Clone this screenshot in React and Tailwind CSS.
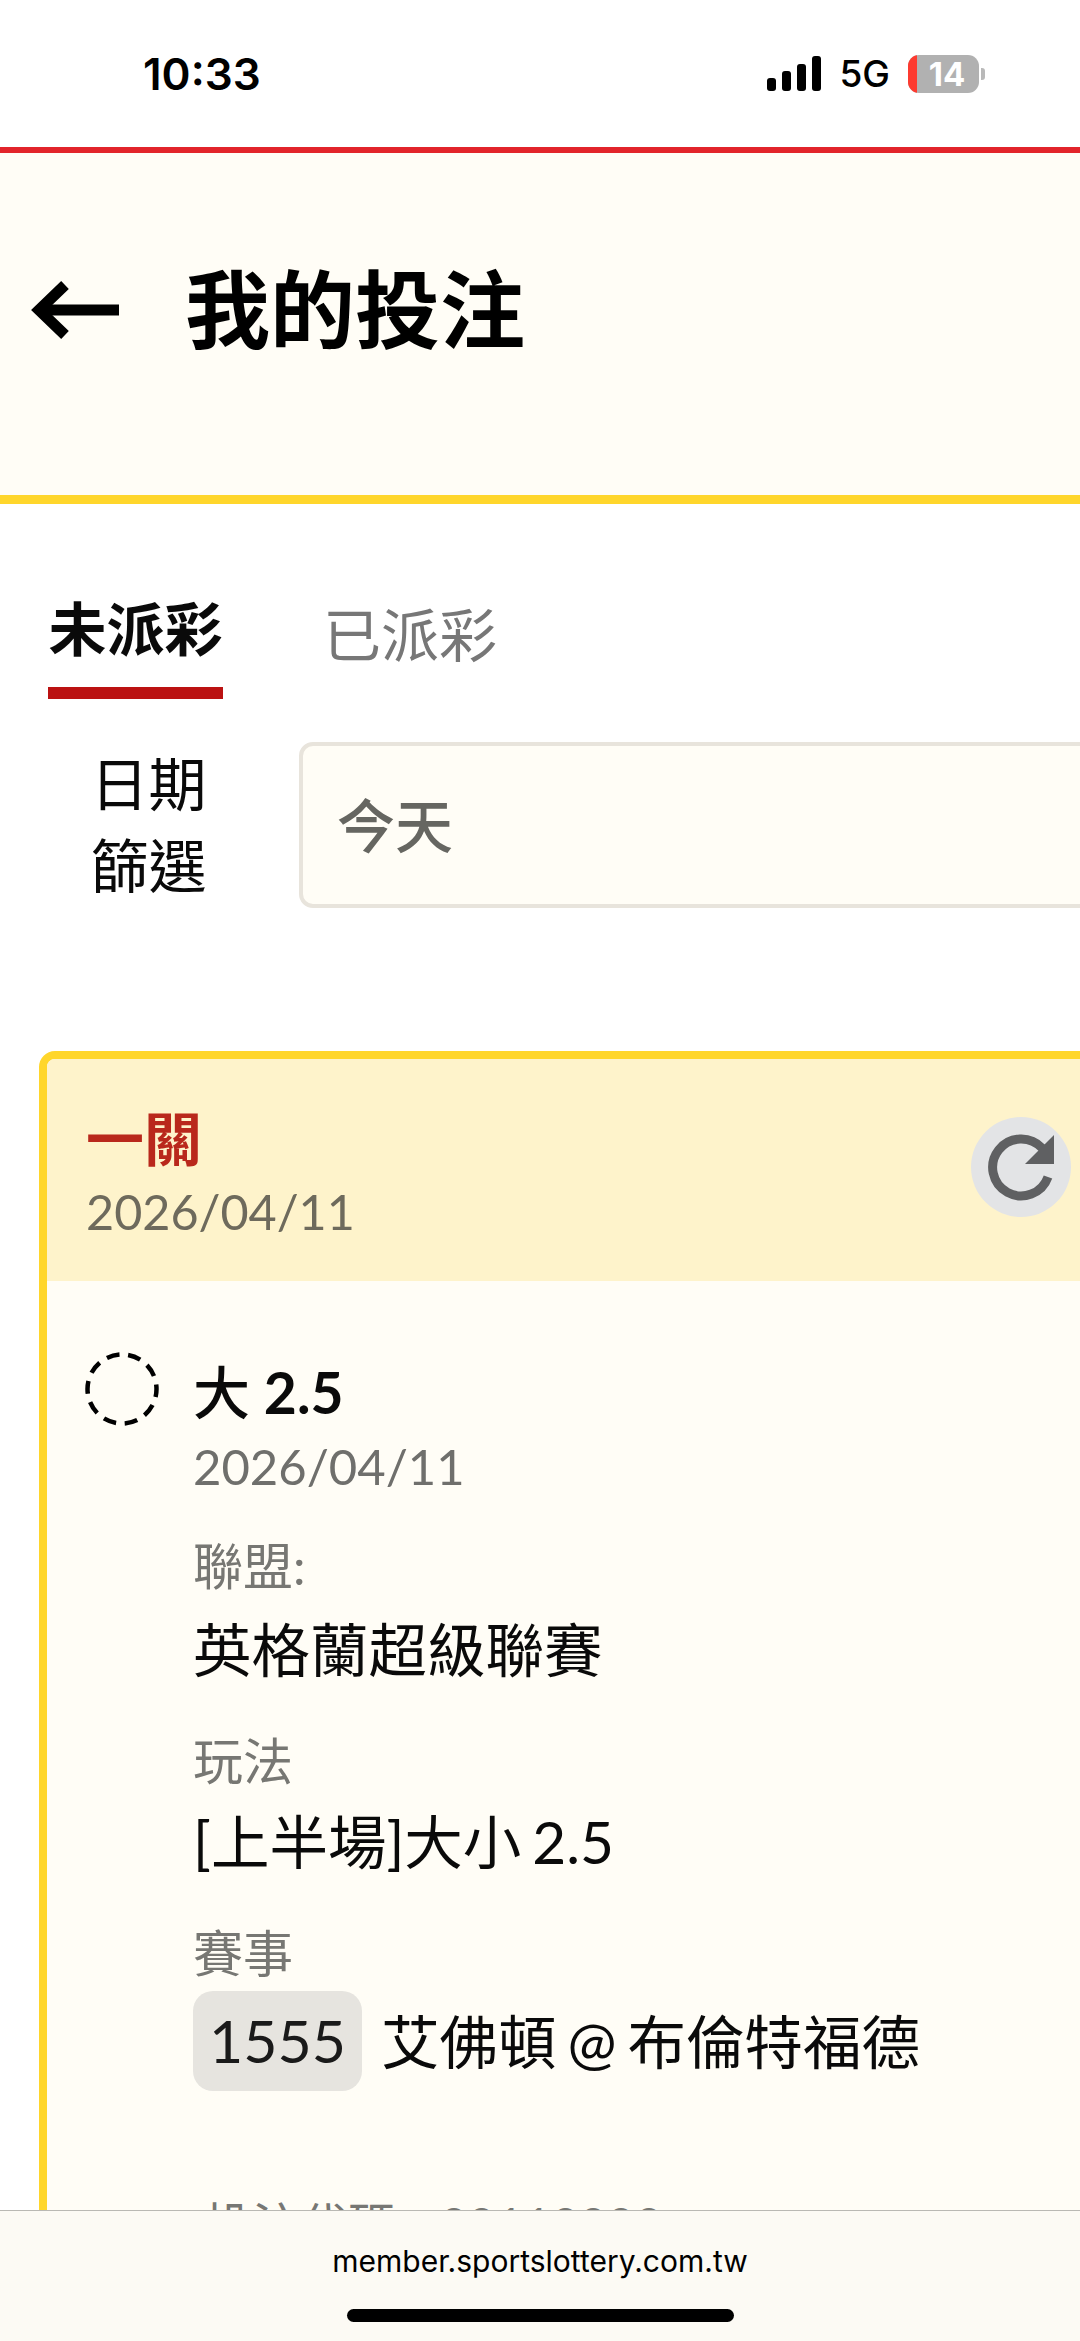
import React from "react";

function Signal() {
  return (
    <div className="flex items-end gap-[6px] h-[35px]">
      <div className="w-[9px] h-[13px] rounded-[3px] bg-black" />
      <div className="w-[9px] h-[20px] rounded-[3px] bg-black" />
      <div className="w-[9px] h-[27px] rounded-[3px] bg-black" />
      <div className="w-[9px] h-[35px] rounded-[3px] bg-black" />
    </div>
  );
}

function Battery() {
  return (
    <div className="flex items-center gap-[2px]">
      <div className="relative flex h-[38px] w-[71px] overflow-hidden rounded-[11px] bg-[#b1b1b1]">
        <div className="h-full w-[9px] bg-[#fd3b30]" />
        <div className="flex-1 pr-[2px] text-center text-[33px] leading-[38px] font-bold text-white font-['Inter',sans-serif]">14</div>
      </div>
      <div className="h-[12px] w-[4px] rounded-r-[3px] bg-[#b9b9b9]" />
    </div>
  );
}

function Label({ children }) {
  return <div className="text-[50px] leading-[60px] text-[#777773]">{children}</div>;
}

function Value({ children }) {
  return <div className="text-[58.5px] leading-[72px] text-[#0a0a0a] [word-spacing:-4px]">{children}</div>;
}

export default function App() {
  return (
    <div className="relative h-[2341px] w-[1080px] overflow-hidden bg-white font-['Lato','Noto_Sans_CJK_TC',sans-serif]">
      <div className="flex h-[147px] items-center justify-between pl-[143px] pr-[95px] font-['Inter',sans-serif]">
        <div className="text-[44px] font-semibold leading-none text-black">10:33</div>
        <div className="flex items-center">
          <Signal />
          <div className="ml-[18px] mr-[18px] text-[37px] font-medium leading-none text-black">5G</div>
          <Battery />
        </div>
      </div>
      <div className="h-[6px] bg-[#e2242b]" />
      <header className="flex h-[351px] items-center border-b-[9px] border-[#ffd62b] bg-[#fffdf6] pb-[29px] pl-[31px]">
        <svg width="88" height="58" viewBox="0 0 88 58" className="shrink-0">
          <path d="M88 29H10" stroke="#000" strokeWidth="11" fill="none" />
          <path d="M34 4 L8 29 L34 54" stroke="#000" strokeWidth="11" fill="none" />
        </svg>
        <h1 className="ml-[66px] text-[85px] font-bold leading-none text-black">我的投注</h1>
      </header>

      <div className="flex pl-[48px] pt-[85px]">
        <div className="w-[175px] border-b-[12px] border-[#bb1212] pb-[18px] text-center text-[58px] font-bold leading-[80px] text-[#0a0a0a]">未派彩</div>
        <div className="ml-[100px] pt-[6px] text-[58px] leading-[80px] text-[#777777]">已派彩</div>
      </div>

      <div className="mt-[43px] flex items-center">
        <div className="w-[297px] shrink-0 text-center text-[58px] leading-[82px] text-[#0a0a0a]">日期<br />篩選</div>
        <div className="ml-[2px] flex h-[166px] w-[900px] shrink-0 items-center rounded-[14px] border-[4px] border-[#e8e4dc] bg-[#fffdf6] pl-[34px] text-[58px] font-medium text-[#666661]">今天</div>
      </div>

      <section className="ml-[39px] mt-[143px] w-[1200px] overflow-hidden rounded-[16px] border-[8px] border-[#ffd62b] bg-[#fffdf6] pb-[200px]">
        <div className="flex h-[222px] items-start bg-[#fef3cb] pl-[39px]">
          <div className="w-[885px] shrink-0 pt-[46px]">
            <div className="text-[58px] font-bold leading-[68px] text-[#b9281c]">一關</div>
            <div className="mt-[8px] text-[48.5px] leading-[60px] text-[#6e6a5c]">2026/04/11</div>
          </div>
          <button className="mt-[58px] flex h-[100px] w-[100px] shrink-0 items-center justify-center rounded-full bg-[#e3e4e6]">
            <svg width="72" height="72" viewBox="0 0 72 72">
              <path d="M57 17 A28.5 28.5 0 1 0 63 46" stroke="#5f6062" strokeWidth="9" fill="none" />
              <path d="M69 4 V33 H40 Z" fill="#5f6062" />
            </svg>
          </button>
        </div>
        <div className="flex pl-[38px] pt-[71px]">
          <svg width="74" height="74" viewBox="0 0 74 74" className="shrink-0">
            <circle cx="37" cy="37" r="34.5" stroke="#000" strokeWidth="4.5" fill="none" strokeDasharray="13 8.68" strokeDashoffset="5" />
          </svg>
          <div className="ml-[34px] pt-[6px]">
            <div className="text-[57px] font-bold leading-[68px] text-[#0a0a0a]"><span className="font-medium">大</span> 2.5</div>
            <div className="mt-[10px] text-[49px] leading-[60px] text-[#6f6f6c]">2026/04/11</div>
            <div className="mt-[40px]"><Label>聯盟:</Label></div>
            <div className="mt-[17px]"><Value>英格蘭超級聯賽</Value></div>
            <div className="mt-[46px]"><Label>玩法</Label></div>
            <div className="mt-[14px]"><Value>[上半場]大小 2.5</Value></div>
            <div className="mt-[46px]"><Label>賽事</Label></div>
            <div className="mt-[8px] flex items-center">
              <span className="flex h-[100px] w-[169px] items-center justify-center rounded-[20px] bg-[#e6e4df] text-[59px] text-[#1a1a1a]">1555</span>
              <span className="ml-[19px] text-[58.5px] leading-[72px] text-[#0a0a0a] [word-spacing:-4px]">艾佛頓 @ 布倫特福德</span>
            </div>
            <div className="ml-[11px] mt-[104px] flex text-[48px] leading-[60px] text-[#777773]">
              <span>投注代碼</span>
              <span className="ml-[44px]">00110000</span>
            </div>
          </div>
        </div>
      </section>

      <footer className="absolute bottom-0 left-0 flex h-[131px] w-full flex-col items-center border-t-[1px] border-[#b9b8b3] bg-[#fcfaf4] font-['Inter',sans-serif]">
        <div className="mt-[30px] text-[30px] leading-[40px] text-black">member.sportslottery.com.tw</div>
        <div className="mt-[28px] h-[13px] w-[387px] rounded-full bg-black" />
      </footer>
    </div>
  );
}
